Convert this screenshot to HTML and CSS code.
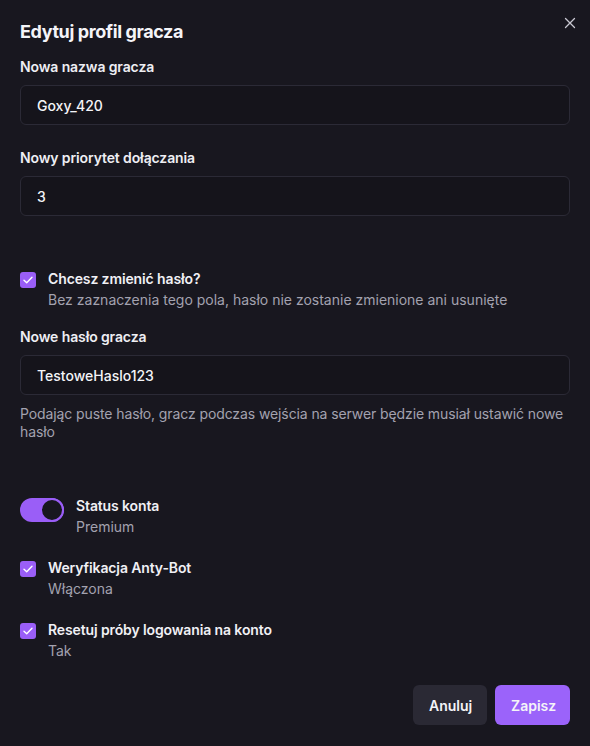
FILE: index.html
```html
<!DOCTYPE html>
<html lang="pl">
<head>
<meta charset="utf-8">
<title>Edytuj profil gracza</title>
<link rel="stylesheet" href="styles.css">
</head>
<body>
<div class="dialog">
  <button class="close" aria-label="Zamknij">
    <svg width="12" height="12" viewBox="0 0 12 12"><path d="M1.5 1.5 L10.5 10.5 M10.5 1.5 L1.5 10.5" stroke="#c9c8d2" stroke-width="1.3" stroke-linecap="round"/></svg>
  </button>
  <h1 class="title">Edytuj profil gracza</h1>

  <div class="field f1">
    <label class="label">Nowa nazwa gracza</label>
    <div class="input">Goxy_420</div>
  </div>

  <div class="field f2">
    <label class="label">Nowy priorytet dołączania</label>
    <div class="input">3</div>
  </div>

  <div class="option o-pass">
    <span class="check"><svg width="10" height="8" viewBox="0 0 10 8"><path d="M1 4.2 L3.7 6.8 L9 1.2" fill="none" stroke="#fff" stroke-width="1.4" stroke-linecap="round" stroke-linejoin="round"/></svg></span>
    <div class="opt-text">
      <div class="opt-title">Chcesz zmienić hasło?</div>
      <div class="opt-desc">Bez zaznaczenia tego pola, hasło nie zostanie zmienione ani usunięte</div>
    </div>
  </div>

  <div class="field f3">
    <label class="label">Nowe hasło gracza</label>
    <div class="input">TestoweHaslo123</div>
    <p class="help">Podając puste hasło, gracz podczas wejścia na serwer będzie musiał ustawić nowe hasło</p>
  </div>

  <div class="option o-status">
    <span class="toggle"><span class="knob"></span></span>
    <div class="opt-text">
      <div class="opt-title">Status konta</div>
      <div class="opt-desc">Premium</div>
    </div>
  </div>

  <div class="option o-next">
    <span class="check"><svg width="10" height="8" viewBox="0 0 10 8"><path d="M1 4.2 L3.7 6.8 L9 1.2" fill="none" stroke="#fff" stroke-width="1.4" stroke-linecap="round" stroke-linejoin="round"/></svg></span>
    <div class="opt-text">
      <div class="opt-title">Weryfikacja Anty-Bot</div>
      <div class="opt-desc">Włączona</div>
    </div>
  </div>

  <div class="option o-next">
    <span class="check"><svg width="10" height="8" viewBox="0 0 10 8"><path d="M1 4.2 L3.7 6.8 L9 1.2" fill="none" stroke="#fff" stroke-width="1.4" stroke-linecap="round" stroke-linejoin="round"/></svg></span>
    <div class="opt-text">
      <div class="opt-title">Resetuj próby logowania na konto</div>
      <div class="opt-desc">Tak</div>
    </div>
  </div>

  <div class="actions">
    <button class="btn btn-cancel">Anuluj</button>
    <button class="btn btn-save">Zapisz</button>
  </div>
</div>
</body>
</html>
```
FILE: styles.css
```css
* { box-sizing: border-box; }
html, body {
  margin: 0;
  padding: 0;
  background: #18171f;
}
body {
  font-family: Inter, "Noto Sans", sans-serif;
  color: #f2f2f6;
  font-size: 14px;
}
.dialog {
  position: relative;
  width: 590px;
  height: 746px;
  padding: 18px 20px 0 20px;
}
.close {
  position: absolute;
  top: 17px;
  right: 14px;
  width: 12px;
  height: 12px;
  padding: 0;
  border: 0;
  background: transparent;
  display: flex;
}
.title {
  margin: 0;
  font-size: 18px;
  line-height: 28px;
  font-weight: 700;
  letter-spacing: -0.4px;
  color: #f4f4f8;
}
.field { display: flex; flex-direction: column; }
.f1 { margin-top: 11px; }
.f2 { margin-top: 23px; }
.f3 { margin-top: 17px; }
.label {
  font-size: 14px;
  line-height: 20px;
  font-weight: 600;
  letter-spacing: -0.12px;
  color: #eeeef3;
  margin-bottom: 8px;
}
.input {
  height: 40px;
  border: 1px solid #2b2a36;
  border-radius: 6px;
  background: #15141b;
  padding: 0 16px;
  display: flex;
  align-items: center;
  font-size: 14px;
  font-weight: 500;
  color: #f4f4f8;
}
.help {
  margin: 10px 0 0 0;
  font-size: 14px;
  line-height: 18px;
  letter-spacing: -0.1px;
  color: #a3a2af;
}
.option {
  display: flex;
  align-items: flex-start;
  gap: 12px;
}
.o-pass { margin-top: 53px; }
.o-status { margin-top: 55px; }
.o-next { margin-top: 21px; }
.check {
  width: 16px;
  height: 16px;
  margin-top: 3px;
  border-radius: 3px;
  background: #9a5ef7;
  display: flex;
  align-items: center;
  justify-content: center;
  flex: none;
}
.toggle {
  width: 44px;
  height: 24px;
  margin-top: 2px;
  border-radius: 12px;
  background: #9a5ef7;
  display: flex;
  justify-content: flex-end;
  flex: none;
}
.knob {
  width: 24px;
  height: 24px;
  border-radius: 50%;
  background: #18171f;
  border: 2px solid #9a5ef7;
}
.opt-title {
  font-size: 14px;
  line-height: 20px;
  font-weight: 600;
  letter-spacing: -0.12px;
  color: #f0f0f5;
}
.opt-desc {
  font-size: 14px;
  line-height: 20px;
  color: #a3a2af;
  margin-top: 1px;
}
.actions {
  margin-top: 24px;
  display: flex;
  justify-content: flex-end;
  gap: 8px;
}
.btn {
  height: 40px;
  border: 0;
  border-radius: 6px;
  font-family: Inter, "Noto Sans", sans-serif;
  font-size: 14px;
  font-weight: 600;
  color: #f4f4f8;
  padding: 0 16px;
}
.btn-cancel { background: #2a2934; width: 74px; }
.btn-save { background: #9b63fa; width: 75px; }
```
